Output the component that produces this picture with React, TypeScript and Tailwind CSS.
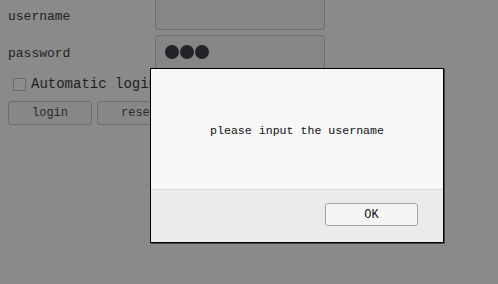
export default function App() {
  const mono = { fontFamily: '"Liberation Mono", "DejaVu Sans Mono", monospace' };
  return (
    <div className="relative w-[498px] h-[284px] overflow-hidden bg-[#8a8a8a] text-[#1f1f1f]" style={mono}>
      <div className="flex flex-col -mt-[4px]">
        <div className="flex items-center h-[34px]">
          <div className="w-[155px] pl-[8px] text-[13px] leading-none pt-[6px]">username</div>
          <div className="w-[170px] h-[34px] border border-[#6d6d6d] rounded-[3px] bg-[#868686]" />
        </div>
        <div className="flex items-center h-[34px] mt-[5px]">
          <div className="w-[155px] pl-[8px] text-[13px] leading-none pt-[3px]">password</div>
          <div className="w-[170px] h-[34px] border border-[#6d6d6d] rounded-[3px] bg-[#868686] flex items-center pl-[9px] gap-[1px]">
            <span className="w-[14px] h-[14px] rounded-full bg-[#222326]" />
            <span className="w-[14px] h-[14px] rounded-full bg-[#222326]" />
            <span className="w-[14px] h-[14px] rounded-full bg-[#222326]" />
          </div>
        </div>
        <div className="flex items-center mt-[8px] h-[14px] pl-[13px]">
          <span className="w-[13px] h-[13px] border border-[#6a6a6a] bg-[#8c8c8c]" />
          <span className="ml-[5px] text-[14px] leading-none">Automatic login</span>
        </div>
        <div className="flex mt-[10px] pl-[8px] gap-[5px]">
          <div className="w-[84px] h-[24px] border border-[#6d6d6d] rounded-[3px] bg-[#878787] flex items-center justify-center text-[12px] text-[#2a2a2a]">login</div>
          <div className="w-[84px] h-[24px] border border-[#6d6d6d] rounded-[3px] bg-[#878787] flex items-center justify-center text-[12px] text-[#2a2a2a]">reset</div>
        </div>
      </div>

      <div className="absolute left-[150px] top-[68px] w-[294px] h-[175px] border border-black bg-[#f7f7f7] flex flex-col shadow-[1px_1px_0_rgba(0,0,0,0.5)]">
        <div className="h-[120px] flex items-center justify-center text-[11.6px] text-[#111] pt-[4px]">
          please input the username
        </div>
        <div className="flex-1 border-t border-[#dcdcdc] bg-[#ebebeb] flex justify-end items-start pr-[25px] pt-[13px]">
          <div className="w-[93px] h-[23px] border border-[#a3a3a3] rounded-[3px] bg-[#f5f5f5] flex items-center justify-center text-[12px] text-[#111]">OK</div>
        </div>
      </div>
    </div>
  );
}
